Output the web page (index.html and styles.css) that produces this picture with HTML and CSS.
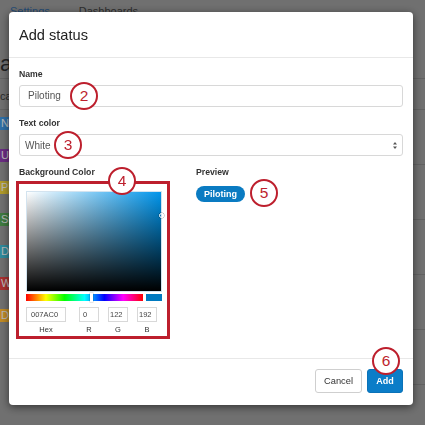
FILE: index.html
```html
<!DOCTYPE html>
<html lang="en">
<head>
<meta charset="utf-8">
<title>Add status</title>
<link rel="stylesheet" href="styles.css">
</head>
<body>
<div class="page">
  <nav class="tabs">
    <span class="tab tab-active">Settings</span>
    <span class="tab">Dashboards</span>
  </nav>
  <header class="page-head"><h1 class="page-title">at</h1></header>
  <div class="table-head"><span class="col-name">cat</span></div>
  <div class="table-body">
    <ul class="tag-list">
      <li class="tag tag-blue">No</li>
      <li class="tag tag-purple">Ur</li>
      <li class="tag tag-yellow">PI</li>
      <li class="tag tag-green">St</li>
      <li class="tag tag-teal">Do</li>
      <li class="tag tag-red">W</li>
      <li class="tag tag-orange">Do</li>
    </ul>
    <div class="rows">
      <div class="row"></div>
      <div class="row"></div>
      <div class="row"></div>
      <div class="row"></div>
      <div class="row"></div>
      <div class="row"></div>
    </div>
  </div>
</div>

<div class="overlay"></div>

<div class="modal">
  <header class="modal-header">
    <h2 class="modal-title">Add status</h2>
  </header>
  <div class="modal-body">
    <div class="field">
      <div class="field-label">Name</div>
      <div class="text-input">Piloting</div>
    </div>
    <div class="field">
      <div class="field-label">Text color</div>
      <div class="select">
        <span class="select-value">White</span>
        <svg class="select-arrows" width="4" height="7" viewBox="0 0 4 7"><path d="M2 0 L4 2.6 L0 2.6 Z M0 4.4 L4 4.4 L2 7 Z" fill="#555"/></svg>
      </div>
    </div>
    <div class="color-row">
      <div class="color-col">
        <div class="field-label label-tight">Background Color</div>
        <div class="highlight">
          <div class="sv"><span class="sv-cursor"></span></div>
          <div class="hue-row">
            <div class="hue"><span class="hue-thumb"></span></div>
            <div class="swatch"></div>
          </div>
          <div class="channels">
            <div class="channel channel-hex"><div class="channel-box channel-box-hex">007AC0</div><div class="channel-label">Hex</div></div>
            <div class="channel"><div class="channel-box">0</div><div class="channel-label">R</div></div>
            <div class="channel"><div class="channel-box channel-box-tight">122</div><div class="channel-label">G</div></div>
            <div class="channel"><div class="channel-box channel-box-tight">192</div><div class="channel-label">B</div></div>
          </div>
        </div>
      </div>
      <div class="preview-col">
        <div class="field-label">Preview</div>
        <span class="pill">Piloting</span>
      </div>
    </div>
  </div>
  <footer class="modal-footer">
    <button class="btn btn-default">Cancel</button>
    <button class="btn btn-primary">Add</button>
  </footer>

  <span class="callout callout-2">2</span>
  <span class="callout callout-3">3</span>
  <span class="callout callout-4">4</span>
  <span class="callout callout-5">5</span>
  <span class="callout callout-6">6</span>
</div>
</body>
</html>
```

FILE: styles.css
```css
* { box-sizing: border-box; }

html, body {
  margin: 0;
  padding: 0;
}

body {
  width: 425px;
  height: 425px;
  overflow: hidden;
  font-family: "Liberation Sans", Arial, Helvetica, sans-serif;
  background: #8c8c8c;
}

/* ---------- background page ---------- */
.page {
  width: 425px;
  height: 425px;
  background: #8c8c8c;
  color: #2a2a2a;
}

.tabs {
  display: flex;
  gap: 29px;
  height: 24px;
  padding: 5px 0 0 10px;
  font-size: 11px;
  line-height: 13px;
}

.tab { color: #3a3a3a; }
.tab-active { color: #2c5f94; }

.page-head {
  height: 55px;
  padding-top: 27px;
  border-bottom: 1px solid #7b7b7b;
}

.page-title {
  margin: 0;
  font-size: 22px;
  font-weight: normal;
  line-height: 26px;
  color: #2a2a2a;
}

.table-head {
  height: 31px;
  padding-top: 11px;
  border-bottom: 1px solid #7b7b7b;
  font-size: 11px;
  line-height: 13px;
  color: #333;
}

.table-body {
  display: flex;
}

.tag-list {
  list-style: none;
  margin: 0;
  padding: 7px 0 0;
  width: 70px;
  display: flex;
  flex-direction: column;
  gap: 19px;
}

.tag {
  height: 13px;
  padding-left: 1px;
  font-size: 11px;
  line-height: 13px;
  color: #e6e6e6;
  white-space: nowrap;
  overflow: hidden;
}

.tag-blue { background: #3b8bd0; }
.tag-purple { background: #8538a3; }
.tag-yellow { background: #dcc135; }
.tag-green { background: #4f994f; }
.tag-teal { background: #3badc3; }
.tag-red { background: #d23c3c; }
.tag-orange { background: #f0ad2e; }

.rows { flex: 1; }

.row {
  height: 55px;
  border-bottom: 1px solid #7b7b7b;
}

.overlay {
  position: fixed;
  inset: 0;
  background: rgba(0, 0, 0, 0.2);
}

/* ---------- modal ---------- */
.modal {
  position: fixed;
  left: 9px;
  top: 12px;
  width: 404px;
  height: 393px;
  background: #fff;
  border-radius: 4px;
  box-shadow: 0 2px 8px rgba(0, 0, 0, 0.55);
  display: flex;
  flex-direction: column;
}

.modal-header {
  height: 46px;
  padding: 0 10px;
  display: flex;
  align-items: center;
  border-bottom: 1px solid #e8e8e8;
}

.modal-title {
  margin: 0;
  font-size: 14.6px;
  font-weight: normal;
  color: #222;
  line-height: 18px;
}

.modal-body {
  flex: 1;
  padding: 11px 10px 0;
}

.field { margin-bottom: 11px; }

.field-label {
  font-size: 8.7px;
  font-weight: bold;
  color: #333;
  line-height: 11px;
  margin-bottom: 5px;
}

.label-tight { margin-bottom: 3px; }

.text-input {
  height: 22px;
  border: 1px solid #d8d8d8;
  border-radius: 3px;
  padding: 0 8px;
  font-size: 10px;
  line-height: 20px;
  color: #555;
}

.select {
  height: 22px;
  border: 1px solid #d8d8d8;
  border-radius: 3px;
  padding: 0 5px 0 5px;
  display: flex;
  align-items: center;
  justify-content: space-between;
  font-size: 10px;
  color: #555;
}

.color-row {
  display: grid;
  grid-template-columns: 151px 1fr;
  column-gap: 26px;
}

.highlight {
  margin-left: -3px;
  height: 158px;
  border: 3px solid #bd1f2d;
  padding: 7px 5px 0 7px;
}

.sv {
  position: relative;
  height: 101px;
  border: 1px solid #d3e3ef;
  background:
    linear-gradient(to top, #000 0%, rgba(0, 0, 0, 0) 100%),
    linear-gradient(to right, #fff 0%, hsl(202, 100%, 46%) 100%);
}

.sv-cursor {
  position: absolute;
  right: -3px;
  top: 21px;
  width: 5px;
  height: 5px;
  border: 1px solid #fff;
  border-radius: 50%;
  box-shadow: 0 0 0 0.5px rgba(0, 0, 0, 0.35);
}

.hue-row {
  display: flex;
  gap: 3px;
  height: 7px;
  margin-top: 2px;
}

.hue {
  position: relative;
  flex: 1;
  background: linear-gradient(to right, #f00 0%, #ff0 17%, #0f0 33%, #0ff 50%, #00f 67%, #f0f 83%, #f00 100%);
}

.hue-thumb {
  position: absolute;
  left: 64px;
  top: -1px;
  width: 3px;
  height: 9px;
  background: #fff;
  box-shadow: 0 0 0 0.5px rgba(0, 0, 0, 0.2);
}

.swatch {
  width: 16px;
  background: #007ac0;
}

.channels {
  display: flex;
  gap: 9px;
  margin-top: 6px;
}

.channel { width: 20px; }

.channel-hex {
  width: 40px;
  margin-right: 4px;
}

.channel-box {
  height: 15px;
  border: 1px solid #d8d8d8;
  padding-left: 3px;
  font-size: 7.5px;
  line-height: 13px;
  color: #444;
}

.channel-box-hex { padding-left: 4px; }
.channel-box-tight { padding-left: 1px; }

.channel-label {
  margin-top: 3px;
  font-size: 7.5px;
  line-height: 10px;
  text-align: center;
  color: #333;
}

.pill {
  display: inline-block;
  margin-top: 3px;
  height: 16px;
  padding: 0 8px;
  border-radius: 8px;
  background: #0a7bc2;
  color: #fff;
  font-size: 9px;
  font-weight: bold;
  line-height: 16px;
}

.modal-footer {
  height: 47px;
  border-top: 1px solid #e8e8e8;
  padding: 10px 10px 0;
  display: flex;
  justify-content: flex-end;
  align-items: flex-start;
  gap: 5px;
}

.btn {
  height: 24px;
  border-radius: 3px;
  font-family: inherit;
  font-size: 9.3px;
  padding: 0;
  cursor: pointer;
}

.btn-default {
  width: 47px;
  background: #fff;
  border: 1px solid #cfcfcf;
  color: #333;
}

.btn-primary {
  width: 36px;
  background: #0b7dc8;
  border: 1px solid #0a72b8;
  color: #fff;
  font-weight: bold;
  font-size: 9px;
}

/* ---------- annotation callouts ---------- */
.callout {
  position: absolute;
  width: 28px;
  height: 28px;
  border: 2.6px solid #bd1f2d;
  border-radius: 50%;
  background: #fff;
  color: #bd1f2d;
  font-size: 15.5px;
  line-height: 1;
  display: flex;
  align-items: center;
  justify-content: center;
}

.callout-2 { left: 61px; top: 70px; }
.callout-3 { left: 45px; top: 119px; }
.callout-4 { left: 99px; top: 155px; }
.callout-5 { left: 241px; top: 167px; }
.callout-6 { left: 363px; top: 335px; }
```
